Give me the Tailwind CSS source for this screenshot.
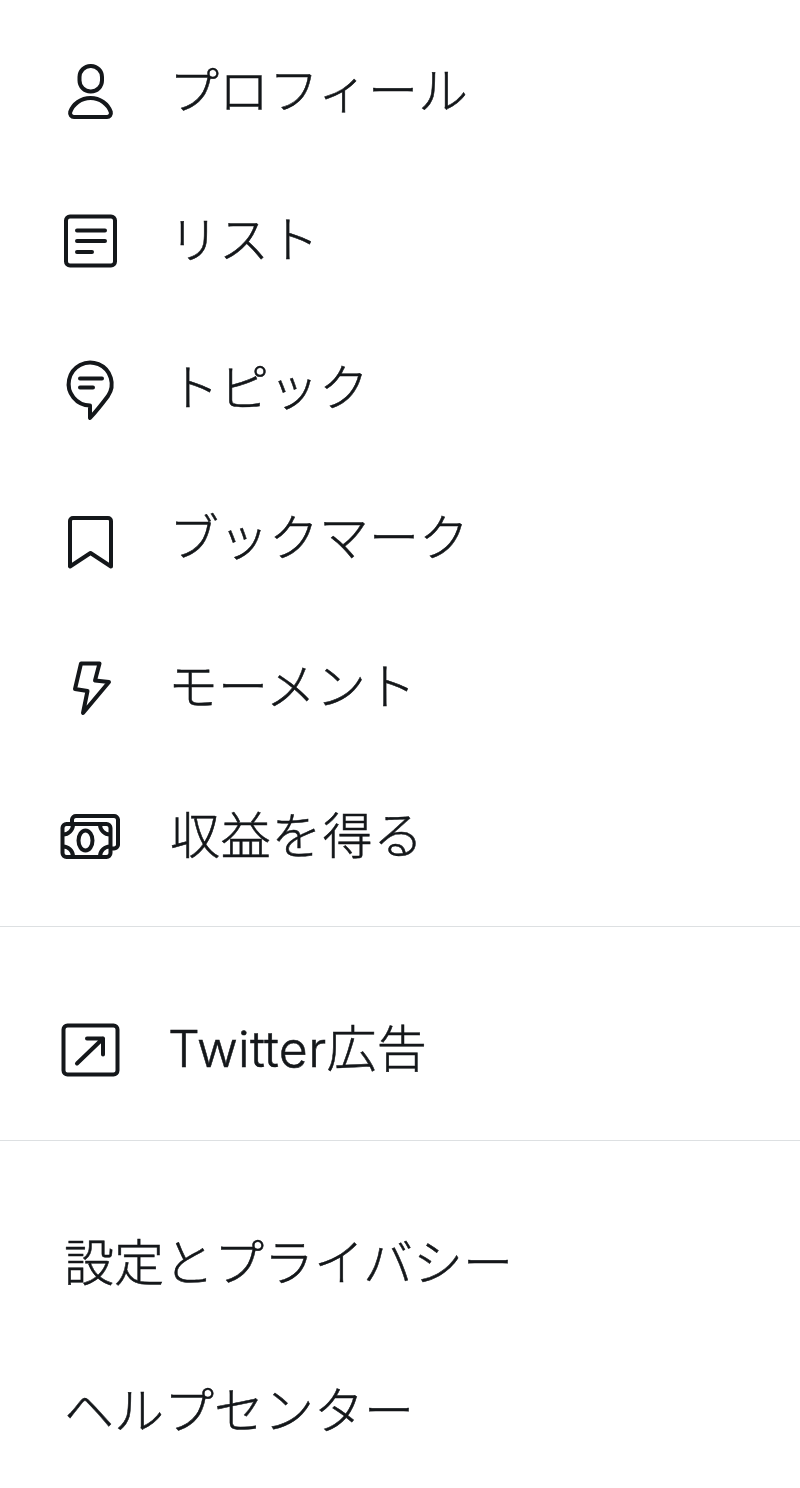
<!DOCTYPE html>
<html lang="ja">
<head>
    <meta charset="UTF-8">
    <title>Menu</title>
    <script src="https://cdn.jsdelivr.net/npm/@tailwindcss/browser@4"></script>
</head>
<body class="bg-white">
    <div class="w-[800px] h-[1488px] overflow-hidden bg-white text-[#14171a] text-[50px] leading-none font-['Noto_Sans_CJK_JP',sans-serif] font-light [-webkit-text-stroke:0.5px_#14171a]">
        <!-- Main links -->
        <div class="pt-[15px] pb-[17px]">
            <div class="flex items-center h-[149px] pl-[50px]">
                <svg class="w-[80px] h-[60px] overflow-visible" viewBox="0 0 80 60" fill="none" stroke="#14171a" stroke-width="4" stroke-linecap="round" stroke-linejoin="round">
                    <rect x="29.5" y="6" width="22.5" height="25.5" rx="11"/>
                    <path d="M24 57h33a4 4 0 0 0 3.8-5C58 44 50 38 40.5 38S23 44 20.2 52a4 4 0 0 0 3.8 5z"/>
                </svg>
                <span class="ml-[39px] pb-[6px]">プロフィール</span>
            </div>
            <div class="flex items-center h-[149px] pl-[50px]">
                <svg class="w-[80px] h-[60px] overflow-visible" viewBox="0 0 80 60" fill="none" stroke="#14171a" stroke-width="4" stroke-linecap="round" stroke-linejoin="round">
                    <rect x="16" y="7.5" width="49" height="49" rx="4"/>
                    <path d="M27 21.5h28M27 32h28M27 43h15"/>
                </svg>
                <span class="ml-[39px] pb-[6px]">リスト</span>
            </div>
            <div class="flex items-center h-[149px] pl-[50px]">
                <svg class="w-[80px] h-[60px] overflow-visible" viewBox="0 0 80 60" fill="none" stroke="#14171a" stroke-width="4" stroke-linecap="round" stroke-linejoin="round">
                    <path d="M40 47.5A21.5 21.5 0 1 1 58 38C52 46 46 53.5 40 60V47.5z"/>
                    <path d="M30 20.5h22M30 29.5h13"/>
                </svg>
                <span class="ml-[39px] pb-[8px]">トピック</span>
            </div>
            <div class="flex items-center h-[149px] pl-[50px]">
                <svg class="w-[80px] h-[60px] overflow-visible" viewBox="0 0 80 60" fill="none" stroke="#14171a" stroke-width="4" stroke-linecap="round" stroke-linejoin="round">
                    <path d="M20 59.5V14a3 3 0 0 1 3-3h35a3 3 0 0 1 3 3v45.5L40.5 46z"/>
                </svg>
                <span class="ml-[39px] pb-[6px]">ブックマーク</span>
            </div>
            <div class="flex items-center h-[149px] pl-[50px]">
                <svg class="w-[80px] h-[60px] overflow-visible" viewBox="0 0 80 60" fill="none" stroke="#14171a" stroke-width="4" stroke-linecap="round" stroke-linejoin="round">
                    <path d="M31 7.5H49.5L45 24.5L59 26L33 57L37.5 35L25 33z"/>
                </svg>
                <span class="ml-[38px] pb-[6px]">モーメント</span>
            </div>
            <div class="flex items-center h-[149px] pl-[50px]">
                <svg class="w-[80px] h-[60px] overflow-visible" viewBox="0 0 80 60" fill="none" stroke="#14171a" stroke-width="4" stroke-linecap="round" stroke-linejoin="round">
                    <rect x="12.5" y="19" width="48" height="33" rx="4"/>
                    <ellipse cx="35.5" cy="35.5" rx="7" ry="10"/>
                    <path d="M22 17V14.5a4 4 0 0 1 4-3.5h38a4 4 0 0 1 4 3.5v25.5a4 4 0 0 1-4 3.5h-3"/>
                    <path d="M13 29.5a10 10 0 0 0 10-10M50 19.5a10 10 0 0 0 10 10M13 41.5a10 10 0 0 1 10 10M50 51.5a10 10 0 0 1 10-10"/>
                </svg>
                <span class="ml-[40px] pb-[6px] tracking-[0.8px]">収益を得る</span>
            </div>
        </div>
        <!-- Ads -->
        <div class="border-t border-[#dde0e2] pt-[47px] pb-[17px]">
            <div class="flex items-center h-[149px] pl-[49px]">
                <svg class="w-[80px] h-[60px] overflow-visible" viewBox="0 0 80 60" fill="none" stroke="#14171a" stroke-width="4" stroke-linecap="round" stroke-linejoin="round">
                    <rect x="14.5" y="6.5" width="54" height="49" rx="4"/>
                    <path d="M28 44.5L54 19.5M38 19.5H54V35.5"/>
                </svg>
                <span class="ml-[39px] tracking-[0.3px] font-['Inter','Noto_Sans_CJK_JP',sans-serif]">Twitter広告</span>
            </div>
        </div>
        <!-- Settings -->
        <div class="border-t border-[#dde0e2] pt-[44px]">
            <div class="flex items-center h-[148px] pl-[64px]">設定とプライバシー</div>
            <div class="flex items-center h-[148px] pl-[64px]">ヘルプセンター</div>
        </div>
    </div>
</body>
</html>
